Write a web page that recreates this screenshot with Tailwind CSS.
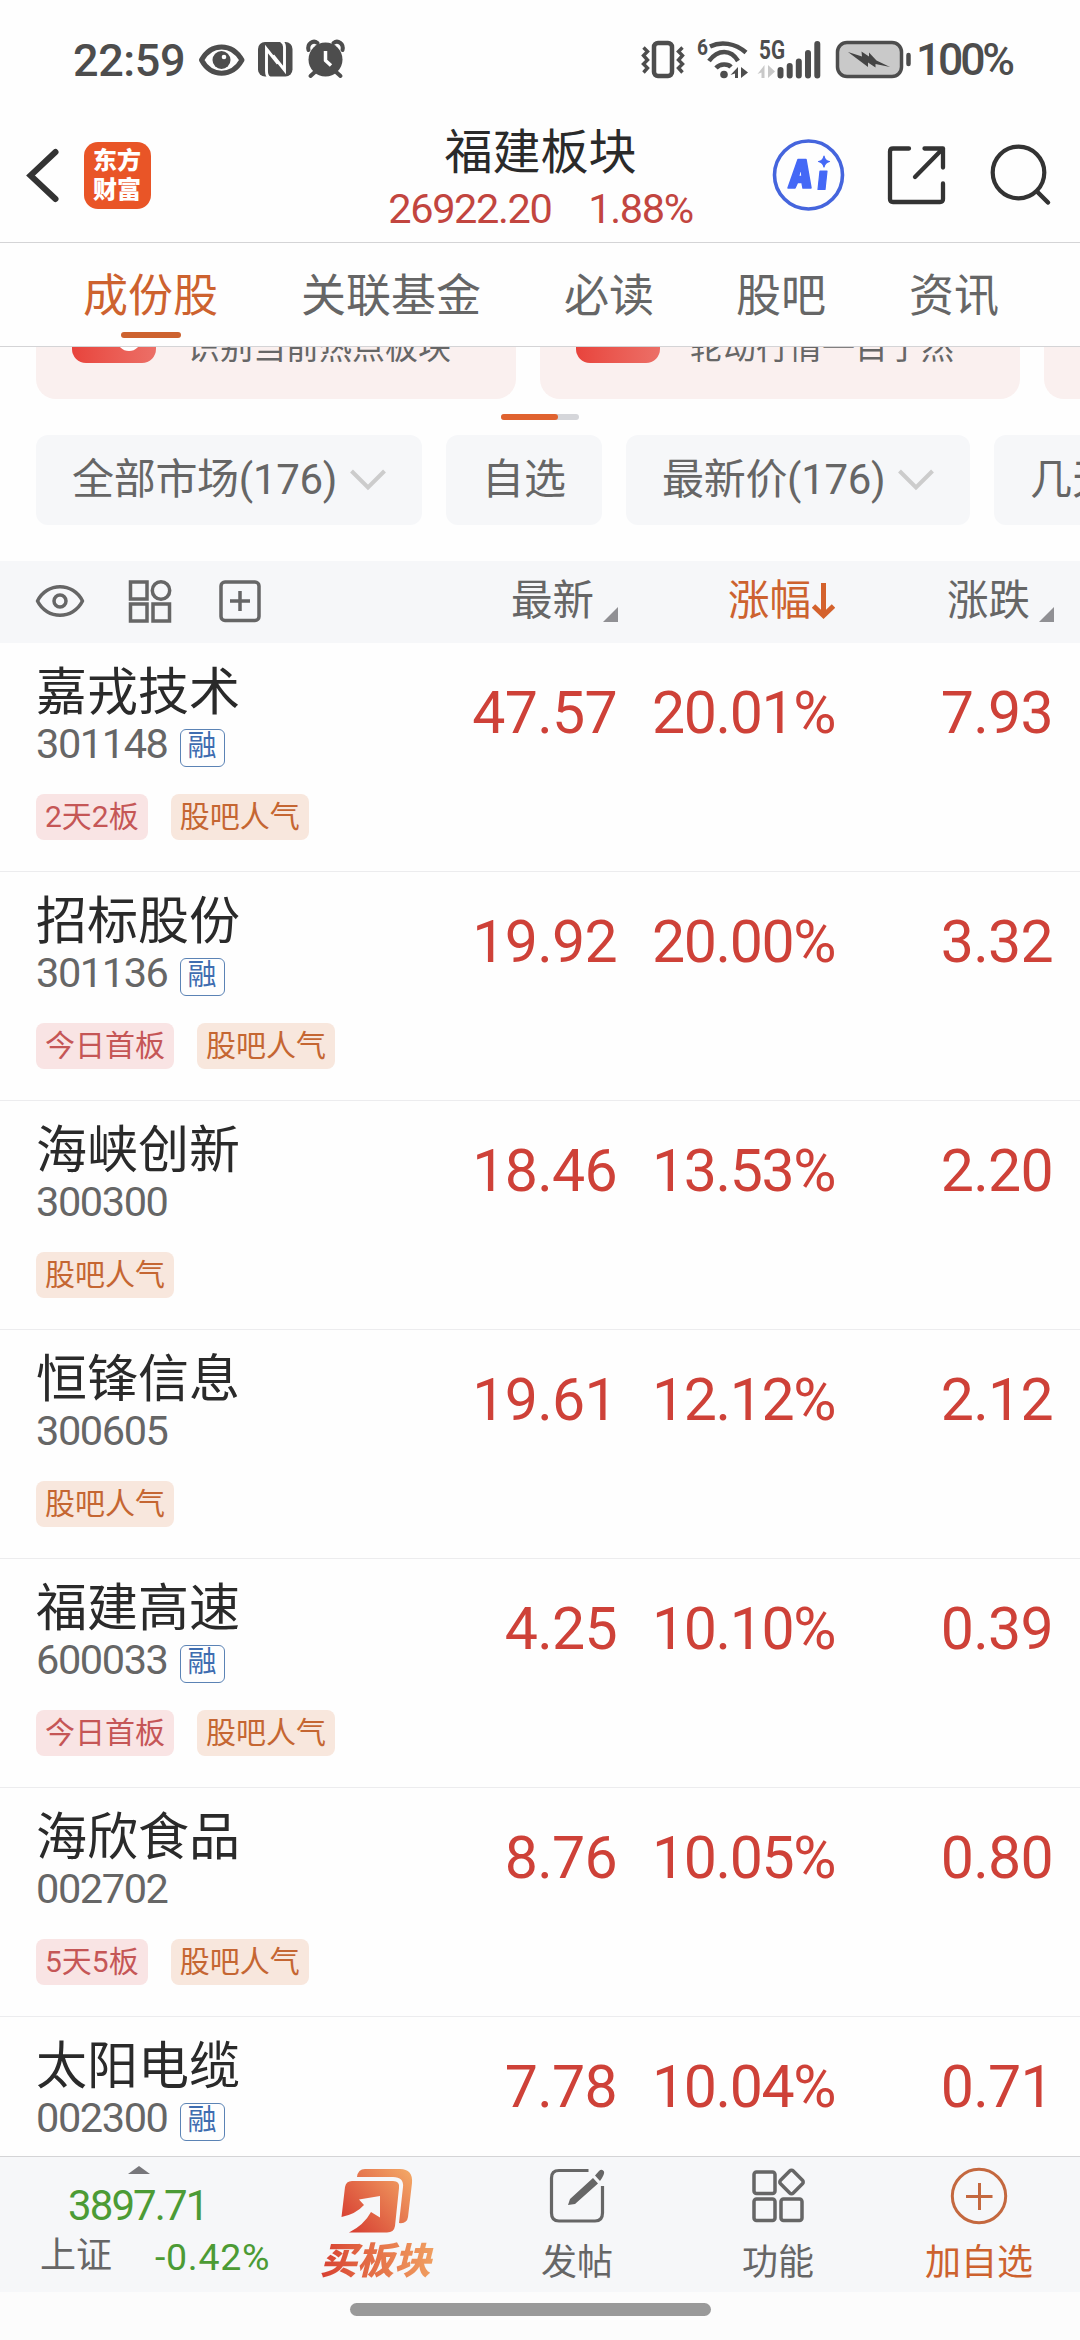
<!DOCTYPE html>
<html lang="zh-CN">
<head>
<meta charset="utf-8">
<title>福建板块</title>
<script src="https://cdn.jsdelivr.net/npm/@tailwindcss/browser@4"></script>
</head>
<body class="w-[1080px] h-[2340px] overflow-hidden bg-[#fefefe] font-['Roboto','Noto_Sans_CJK_SC',sans-serif] text-[#666] flex flex-col">

<!-- status bar -->
<header class="h-[242px] shrink-0 flex flex-col">
  <div class="h-[120px] shrink-0 flex items-center text-[#4d4d4d] font-medium text-[45px] leading-none">
    <span class="w-[125px] ml-[73px] tracking-[-0.4px] whitespace-nowrap">22:59</span>
    <svg class="w-[156px] h-[120px] shrink-0" viewBox="198 0 156 120" fill="none">
      <path d="M201.500 60C211 42.500 232 42.500 242 60C232 77.500 211 77.500 201.500 60Z" stroke="#4d4d4d" stroke-width="5" stroke-linejoin="round"/>
      <circle cx="221.500" cy="60" r="9" fill="#4d4d4d"/><circle cx="224" cy="57" r="2.300" fill="#fff"/>
      <rect x="258" y="42" width="34.500" height="34.500" rx="7" fill="#4d4d4d"/>
      <path d="M269.500 78Q266.500 76 266.500 71V49L278 63.500M281 41Q284.500 43 284.500 47V70L273 55.500" stroke="#fff" stroke-width="2.900"/>
      <circle cx="325.500" cy="59.500" r="17" fill="#4d4d4d"/>
      <path d="M308.500 50C307 44 313 39.500 317.500 43M342.500 50C344 44 338 39.500 333.500 43M310.500 76L316 71M340.500 76L335 71" stroke="#4d4d4d" stroke-width="4" stroke-linecap="round"/>
      <path d="M325.500 51V60.500L331 65.500" stroke="#fff" stroke-width="3.500" stroke-linejoin="round"/>
    </svg>
    <svg class="w-[275px] h-[120px] shrink-0 ml-[284px]" viewBox="638 0 275 120" fill="none">
      <rect x="654" y="43" width="18" height="33" rx="4" stroke="#4d4d4d" stroke-width="4.500"/>
      <path d="M643.500 47.500L647.500 51.500L643.500 55.500L647.500 60L643.500 64L647.500 68L643.500 72.500M682.500 47.500L678.500 51.500L682.500 55.500L678.500 60L682.500 64L678.500 68L682.500 72.500" stroke="#4d4d4d" stroke-width="3.400"/>
      <text x="697" y="55" font-size="22" font-weight="700" fill="#4d4d4d" textLength="11" lengthAdjust="spacingAndGlyphs">6</text>
      <path d="M710 46.500C721 41 735 43 746 52.500M709 61C718 49 731 49 738 61M716 68C720 63.500 728 63.500 731 67" stroke="#4d4d4d" stroke-width="4.500"/>
      <circle cx="724" cy="74.500" r="3.800" fill="#4d4d4d"/>
      <path d="M738 67V78H735V73.500L730.500 75ZM741 67V78L748 72.500Z" fill="#4d4d4d"/>
      <text x="759" y="59" font-size="25" font-weight="700" fill="#4d4d4d" textLength="26" lengthAdjust="spacingAndGlyphs">5G</text>
      <path d="M764.500 65V78H761.500V72.500L757.500 74ZM768 65V78L775 71.500Z" fill="#c8c8c8"/>
      <path d="M780.500 70V75.500M789.700 66V75.500M798.800 61.500V75.500M808 53V75.500M817.300 44V75.500" stroke="#4d4d4d" stroke-width="6" stroke-linecap="round"/>
      <rect x="837.500" y="42.500" width="64" height="34" rx="9.500" fill="#c9c9c9" stroke="#4d4d4d" stroke-width="3.500"/>
      <path d="M848 52L862 56.500L861.500 51.500L869 56.500V52.500L876.500 60.500L890 67L875.500 64V67.500L868 62.500V67Z" fill="#444"/>
      <path d="M908.500 55V64" stroke="#4d4d4d" stroke-width="4.500" stroke-linecap="round"/>
    </svg>
    <span class="ml-[3px] text-[44.500px] tracking-[-3.2px] whitespace-nowrap">100%</span>
  </div>

  <!-- title bar -->
  <div class="h-[122px] flex">
    <svg class="w-[44px] h-[122px] ml-[20px] shrink-0" viewBox="20 120 44 122" fill="none"><path d="M55.500 152L30.500 175.500L55.500 199" stroke="#333" stroke-width="6" stroke-linecap="round"/></svg>
    <div class="w-[67px] h-[67px] mt-[22px] ml-[19.500px] rounded-[14px] bg-[#e95527] text-white font-black text-[24px] leading-[29px] flex flex-col items-center justify-center shrink-0"><span>东方</span><span>财富</span></div>
    <div class="w-[620px] ml-[80px] mr-[-1px] mt-[1px] shrink-0 flex flex-col items-center">
      <h1 class="text-[48px] leading-[64px] font-normal text-[#2a2a2a] whitespace-nowrap">福建板块</h1>
      <div class="flex gap-[37px] text-[41.500px] leading-[48px] text-[#c2453f] tracking-[-1.4px] whitespace-nowrap"><span>26922.20</span><span>1.88%</span></div>
    </div>
    <svg class="w-[300px] h-[122px] ml-[-81px] shrink-0" viewBox="769 120 300 122" fill="none">
      <circle cx="808.500" cy="175" r="34" stroke="#4565dd" stroke-width="3.600"/>
      <path d="M798 159.500H806L811 188H803L802 182.500H797.500L795 188H788ZM801 167L798.500 176.500H802Z" fill="#4468f6" fill-rule="evenodd" stroke="#4468f6" stroke-width="1.500" stroke-linejoin="round"/>
      <path d="M820 171H827L825 189.500H818ZM824 156Q825 161 829.500 161.500Q825 162.500 824 167Q823 162.500 818.500 161.500Q823 161 824 156Z" fill="#4468f6" stroke="#4468f6" stroke-width="1.200" stroke-linejoin="round"/>
      <path d="M909 148.500H893Q890 148.500 890 151.500V199Q890 202 893 202H940Q943 202 943 199V183.500M924.500 148.500H943V167.500M943 148.500L915 177" stroke="#333" stroke-width="4.300" stroke-linecap="round" stroke-linejoin="round"/>
      <circle cx="1018.500" cy="172.500" r="25.800" stroke="#333" stroke-width="4.200"/><path d="M1037 191.500L1048 202.500" stroke="#333" stroke-width="4.500" stroke-linecap="round"/>
    </svg>
  </div>
</header>

<!-- tabs -->
<nav class="h-[105px] shrink-0 border-y border-[#d4d4d6] relative z-10 bg-[#fefefe] flex text-[45px] leading-[108px] whitespace-nowrap">
  <div class="ml-[83px] w-[135px] text-[#cd622f] flex flex-col items-center h-[103px] relative"><span>成份股</span><i class="absolute bottom-[8px] w-[60px] h-[6px] rounded-full bg-[#cd622f]"></i></div>
  <span class="ml-[83px]">关联基金</span>
  <span class="ml-[83px]">必读</span>
  <span class="ml-[82px]">股吧</span>
  <span class="ml-[83px]">资讯</span>
</nav>

<!-- feature cards, scrolled under the tabs -->
<section class="h-[52px] shrink-0 flex gap-[24px] pl-[36px] overflow-hidden">
  <div class="w-[480px] h-[52px] shrink-0 rounded-b-[20px] bg-[#faf0ef] flex items-start pl-[36px] overflow-hidden">
    <div class="w-[84px] h-[16px] overflow-hidden rounded-b-[14px] bg-gradient-to-r from-[#e8433c] to-[#ec6f67] flex justify-center"><i class="w-[24px] h-[24px] mt-[-20px] ml-[30px] rounded-full bg-white"></i></div>
    <span class="text-[33px] leading-[32px] mt-[-15px] ml-[31px] whitespace-nowrap">识别当前热点板块</span>
  </div>
  <div class="w-[480px] h-[52px] shrink-0 rounded-b-[20px] bg-[#faf0ef] flex items-start pl-[36px] overflow-hidden">
    <div class="w-[84px] h-[16px] rounded-b-[14px] bg-gradient-to-r from-[#e8433c] to-[#ec6f67]"></div>
    <span class="text-[33px] leading-[32px] mt-[-15px] ml-[30px] whitespace-nowrap">轮动行情一目了然</span>
  </div>
  <div class="w-[480px] h-[52px] shrink-0 rounded-b-[20px] bg-[#faf0ef]"></div>
</section>
<div class="h-[36px] shrink-0 pt-[15px] flex justify-center"><div class="w-[78px] h-[6px] rounded-full bg-[#d5d6da]"><div class="w-[57px] h-[6px] rounded-full bg-[#e0622f]"></div></div></div>

<!-- filter chips -->
<section class="h-[90px] shrink-0 flex gap-[24px] pl-[36px] overflow-hidden text-[42px] leading-[90px] whitespace-nowrap">
  <div class="w-[386px] shrink-0 rounded-[12px] bg-[#f6f7f9] pl-[36px] flex items-center"><span class="w-[268px] tracking-[-0.300px]">全部市场(176)</span><svg class="w-[36px] h-[24px] ml-[10px]" viewBox="0 0 36 24" fill="none"><path d="M1.500 3L18 19.500L34.500 3" stroke="#ccc" stroke-width="4"/></svg></div>
  <div class="w-[156px] shrink-0 rounded-[12px] bg-[#f6f7f9] text-center">自选</div>
  <div class="w-[344px] shrink-0 rounded-[12px] bg-[#f6f7f9] pl-[36px] flex items-center"><span class="w-[226px] tracking-[-0.300px]">最新价(176)</span><svg class="w-[36px] h-[24px] ml-[10px]" viewBox="0 0 36 24" fill="none"><path d="M1.500 3L18 19.500L34.500 3" stroke="#ccc" stroke-width="4"/></svg></div>
  <div class="w-[344px] shrink-0 rounded-[12px] bg-[#f6f7f9] pl-[36px]">几天几板</div>
</section>

<!-- table header -->
<section class="h-[82px] mt-[36px] shrink-0 bg-[#f6f7f9] flex text-[41.500px] leading-[80px] whitespace-nowrap">
  <svg class="w-[300px] h-[82px] shrink-0" viewBox="0 561 300 82" fill="none" stroke="#666" stroke-width="3.500">
    <path d="M37.500 601C47 582 73 582 82.500 601C73 620 47 620 37.500 601Z" stroke-linejoin="round"/><circle cx="60" cy="601" r="6"/>
    <rect x="130.500" y="582" width="16.500" height="17"/><circle cx="161" cy="590.500" r="8.700"/><rect x="130.500" y="604" width="16.500" height="17"/><rect x="153" y="604" width="16.500" height="17"/>
    <rect x="221" y="582" width="38" height="38.500" rx="4"/><path d="M230 601H250M240 591V611"/>
  </svg>
  <div class="w-[318px] flex justify-end"><span>最新</span><svg class="w-[15px] h-[15px] mt-[46px] ml-[9px]" viewBox="0 0 15 15"><path d="M15 0V15H0Z" fill="#909094"/></svg></div>
  <div class="w-[217px] flex justify-end text-[#cd622f]"><span>涨幅</span><svg class="w-[23px] h-[38px] mt-[21px] ml-[1px]" viewBox="0 0 23 38" fill="none"><path d="M11.500 1V34M1.500 24L11.500 33.500L21.500 24" stroke="#d4622d" stroke-width="5"/></svg></div>
  <div class="w-[219px] flex justify-end"><span>涨跌</span><svg class="w-[15px] h-[15px] mt-[46px] ml-[9px]" viewBox="0 0 15 15"><path d="M15 0V15H0Z" fill="#909094"/></svg></div>
</section>

<main id="list" class="h-[1513px] shrink-0 overflow-hidden"></main>

<!-- bottom bar -->
<footer class="h-[136px] shrink-0 bg-[#f6f7f9] border-t border-[#d4d4d6] flex text-[36px] leading-[44px] whitespace-nowrap">
  <div class="w-[312px] shrink-0 flex flex-col">
    <svg class="w-[22px] h-[8px] mt-[9px] ml-[127.500px]" viewBox="0 0 22 8"><path d="M0 8L11 0L22 8Z" fill="#77777b"/></svg>
    <span class="text-[42px] leading-[48px] mt-[8px] ml-[68px] text-[#4c9b35] tracking-[-1.900px]">3897.71</span>
    <div class="flex mt-[4px]"><span class="ml-[40px]">上证</span><span class="ml-[43px] mt-[1px] text-[37.500px] text-[#4c9b35] tracking-[0.700px]">-0.42%</span></div>
  </div>
  <div class="w-[130px] shrink-0 flex flex-col items-center">
    <svg class="w-[74px] h-[66px] mt-[11px]" viewBox="340 2168 74 66">
      <defs><linearGradient id="g" gradientUnits="userSpaceOnUse" x1="346" y1="2232" x2="410" y2="2175"><stop offset="0" stop-color="#d63a30"/><stop offset="1" stop-color="#f2a464"/></linearGradient></defs>
      <path fill="url(#g)" d="M357 2177Q358 2169 365 2169H400Q413 2169 412 2183L408 2217Q407 2224 399 2223L403 2187Q404 2177 393 2177Z"/>
      <path fill="url(#g)" fill-rule="evenodd" d="M345 2187Q346 2181 352 2181H393Q400 2181 399 2188L395 2226Q394 2232.500 387 2232.500H349Q364 2225 371 2212L380 2217.500V2196L359 2199.500L364 2205Q356 2214 341.500 2217Z"/>
    </svg>
    <span class="mt-[6px] text-[37px] leading-[44px] font-black italic bg-gradient-to-r from-[#d63a30] to-[#f0a062] bg-clip-text text-transparent px-1 mr-[3px]">买板块</span>
  </div>
  <div class="w-[270px] shrink-0 flex flex-col items-center">
    <svg class="w-[56px] h-[56px] mt-[11px] mb-[17px]" viewBox="549 2168 56 56" fill="none">
      <path d="M588.500 2170.500H559Q551.500 2170.500 551.500 2178V2213Q551.500 2221 559 2221H595Q602.500 2221 602.500 2213V2186" stroke="#666" stroke-width="3.200"/>
      <path d="M593 2178L598 2183.500L575 2204L568 2205L570 2199ZM595 2175.500L599 2171Q602 2168.500 604 2171.500Q605 2174 600 2181Z" fill="#666"/>
    </svg>
    <span>发帖</span>
  </div>
  <div class="w-[132px] shrink-0 flex flex-col items-center">
    <svg class="w-[56px] h-[56px] mt-[11px] mb-[17px]" viewBox="750 2168 56 56" fill="none" stroke="#666" stroke-width="3.500">
      <rect x="754" y="2172" width="21" height="21.500" rx="2.500"/><rect x="754" y="2199" width="21" height="21.500" rx="2.500"/><rect x="781" y="2199" width="21" height="21.500" rx="2.500"/><rect x="782.500" y="2173" width="18" height="18" rx="2.500" transform="rotate(45 791.500 2182)"/>
    </svg>
    <span>功能</span>
  </div>
  <div class="w-[270px] shrink-0 flex flex-col items-center text-[#cd622f]">
    <svg class="w-[58px] h-[58px] mt-[10px] mb-[16px]" viewBox="950 2167 58 58" fill="none" stroke="#c4683f" stroke-width="3"><circle cx="979" cy="2196" r="26.700"/><path d="M966 2196.500H992.500M979.500 2183V2210"/></svg>
    <span>加自选</span>
  </div>
</footer>
<div class="h-[48px] shrink-0 bg-[#fcfcfc] pt-[11px] pl-[350px]"><div class="w-[361px] h-[13px] rounded-full bg-[#999]"></div></div>

<script>
const rows = [
  ['嘉戎技术','301148',1,'2天2板','47.57','20.01%','7.93'],
  ['招标股份','301136',1,'今日首板','19.92','20.00%','3.32'],
  ['海峡创新','300300',0,'','18.46','13.53%','2.20'],
  ['恒锋信息','300605',0,'','19.61','12.12%','2.12'],
  ['福建高速','600033',1,'今日首板','4.25','10.10%','0.39'],
  ['海欣食品','002702',0,'5天5板','8.76','10.05%','0.80'],
  ['太阳电缆','002300',1,'','7.78','10.04%','0.71'],
];
document.getElementById('list').innerHTML = rows.map(([name, code, margin, tag, price, pct, diff]) => `
<div class="h-[229px] border-b border-[#ececee] flex whitespace-nowrap">
  <div class="w-[400px] shrink-0 pl-[36px] flex flex-col">
    <div class="mt-[18px] text-[51px] leading-[64px] text-[#2a2a2a]">${name}</div>
    <div class="h-[49px] mt-[-3px] flex items-start">
      <span class="text-[41.500px] leading-[44px] tracking-[-1.400px]">${code}</span>
      ${margin ? '<span class="ml-[12px] mt-[7px] w-[45px] h-[38px] border-[1.500px] border-[#5b83b5] rounded-[6px] text-[#3f6db0] text-[29px] leading-[32px] text-center">融</span>' : ''}
    </div>
    <div class="mt-[23px] flex gap-[23px] text-[30px] leading-[45px]">
      ${tag ? `<span class="h-[46px] px-[9px] rounded-[8px] bg-[#f9e4e4] text-[#c55656]">${tag}</span>` : ''}
      <span class="h-[46px] px-[9px] rounded-[8px] bg-[#f8e7dd] text-[#c56632]">股吧人气</span>
    </div>
  </div>
  <div class="flex text-[59px] leading-[70px] pt-[35px] text-[#ce4138] text-right">
    <span class="w-[217px] tracking-[-0.700px]">${price}</span>
    <span class="w-[218px] tracking-[-1.400px]">${pct}</span>
    <span class="w-[218px] tracking-[-0.700px]">${diff}</span>
  </div>
</div>`).join('');
</script>
</body>
</html>
